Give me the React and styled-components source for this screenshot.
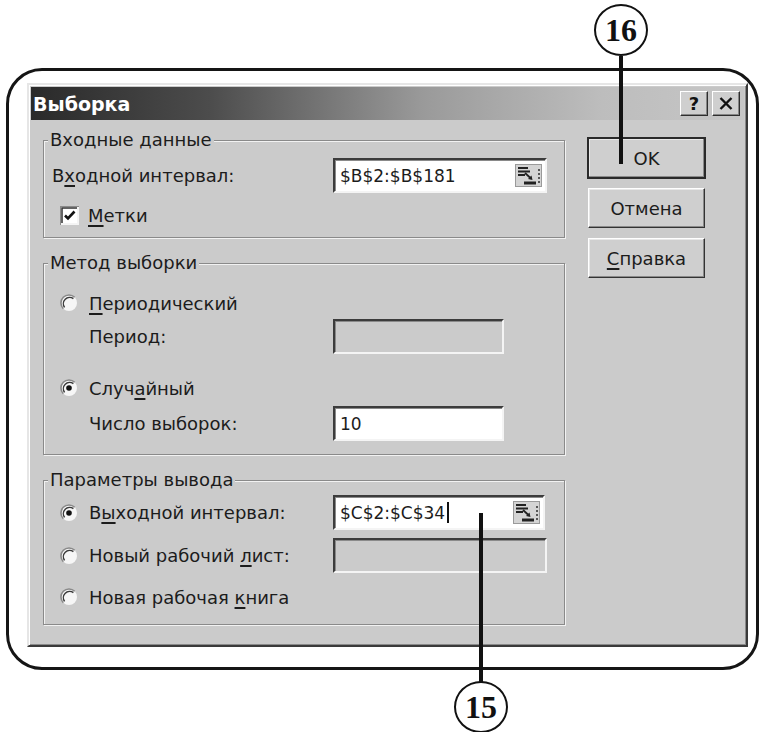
import React from "react"
import styled, { createGlobalStyle } from "styled-components"

const FACE = "#cbcbcb"
const INK = "#1c1c1c"

const Global = createGlobalStyle`
  html, body {
    margin: 0;
    padding: 0;
    background: #fff;
  }
  * {
    box-sizing: border-box;
  }
`

const Page = styled.div`
  position: relative;
  width: 762px;
  height: 732px;
  padding: 68px 0 0 6px;
  overflow: hidden;
  background: #fff;
  font-family: "DejaVu Sans", Verdana, sans-serif;
  color: ${INK};
`

const Frame = styled.div`
  width: 753px;
  height: 602px;
  border: 3px solid #151515;
  border-radius: 36px;
  padding: 12px 8px 20px 18px;
`

const Dialog = styled.div`
  width: 721px;
  height: 564px;
  background: ${FACE};
  border: 2px solid;
  border-color: #e6e6e6 #3a3a3a #3a3a3a #e6e6e6;
  padding: 2px;
  box-shadow: inset 1px 1px #fff, inset -1px -1px #8a8a8a;
  display: flex;
  flex-direction: column;
`

const TitleBar = styled.div`
  height: 33px;
  display: flex;
  align-items: center;
  padding: 0 4px 0 2px;
  background: linear-gradient(to right, #2a2a2a 0%, #4c4c4c 25%, #9a9a9a 55%, #bdbdbd 80%, #c6c6c6 100%);
`

const Title = styled.div`
  flex: 1;
  font-weight: bold;
  font-size: 19px;
  color: #fff;
  letter-spacing: 0;
`

const CapButtons = styled.div`
  display: flex;
  gap: 4px;
`

const CapButton = styled.div`
  width: 28px;
  height: 25px;
  display: flex;
  align-items: center;
  justify-content: center;
  background: #cfcfcf;
  border: 1px solid;
  border-color: #fff #2e2e2e #2e2e2e #fff;
  box-shadow: inset -1px -1px #858585;
  font-weight: bold;
  font-size: 18px;
  color: #111;
`

const Body = styled.div`
  display: grid;
  grid-template-columns: 522px 117px;
  column-gap: 23px;
  padding: 10px 0 0 12px;
`

const Groups = styled.div`
  display: flex;
  flex-direction: column;
  gap: 15px;
`

const Group = styled.fieldset`
  margin: 0;
  min-width: 0;
  padding: ${p => p.$pad};
  border: 1px solid #8a8a8a;
  box-shadow: inset 1px 1px #f2f2f2, 1px 1px #f2f2f2;
`

const Legend = styled.legend`
  margin-left: -4px;
  padding: 0 2px;
  font-size: 18px;
  line-height: 20px;
  background: ${FACE};
`

const Row = styled.div`
  display: grid;
  grid-template-columns: 281px 1fr;
  align-items: center;
  height: ${p => p.$h}px;
  margin-top: ${p => p.$mt || 0}px;
  font-size: 18px;
`

const Label = styled.div`
  display: flex;
  align-items: center;
  padding-left: ${p => p.$indent || 0}px;
  gap: ${p => p.$gap || 0}px;
  white-space: nowrap;
`

const Key = styled.u`
  text-decoration-thickness: 1.5px;
  text-underline-offset: 3px;
`

const Field = styled.div`
  width: ${p => p.$w}px;
  height: 35px;
  display: flex;
  align-items: center;
  padding: 0 3px 0 5px;
  background: ${p => (p.$disabled ? FACE : "#fff")};
  border: 2px solid;
  border-color: #3c3c3c #f4f4f4 #f4f4f4 #3c3c3c;
  box-shadow: inset 1px 1px #8a8a8a;
  font-size: 17px;
`

const FieldText = styled.span`
  flex: 1;
  display: flex;
  align-items: center;
`

const Caret = styled.span`
  display: inline-block;
  width: 1.5px;
  height: 21px;
  margin-left: 2px;
  background: #111;
`

const Buttons = styled.div`
  display: flex;
  flex-direction: column;
  gap: 10px;
  padding-top: 8px;
`

const Button = styled.div`
  height: 40px;
  display: flex;
  align-items: center;
  justify-content: center;
  background: #cfcfcf;
  border: 1px solid;
  border-color: #fff #333 #333 #fff;
  box-shadow: inset -1px -1px #8a8a8a, inset 1px 1px #e8e8e8;
  outline: ${p => (p.$default ? "2px solid #2a2a2a" : "none")};
  outline-offset: -1px;
  font-size: 18px;
`

const Bubble = styled.div`
  position: absolute;
  left: ${p => p.$x}px;
  top: ${p => p.$y}px;
  width: 54px;
  height: 52px;
  border: 2px solid #111;
  border-radius: 50%;
  background: #fff;
  display: flex;
  align-items: center;
  justify-content: center;
  font-family: "Liberation Serif", "Times New Roman", serif;
  font-weight: bold;
  font-size: 32px;
  color: #111;
  z-index: 2;
`

const Leader = styled.div`
  position: absolute;
  left: ${p => p.$x}px;
  top: ${p => p.$y}px;
  width: 4px;
  height: ${p => p.$h}px;
  background: #111;
  z-index: 1;
`

const Check = ({ checked }) => (
  <svg width="19" height="19" viewBox="0 0 19 19">
    <rect x="0" y="0" width="19" height="19" fill="#f4f4f4" />
    <path d="M0 19 V0 H19" stroke="#8a8a8a" strokeWidth="2" fill="none" />
    <path d="M2 17 V2 H17" stroke="#333" strokeWidth="1.5" fill="none" />
    <rect x="3" y="3" width="14" height="14" fill="#fff" />
    {checked && <path d="M5 9.5 L8 12.5 L14.5 5.5" stroke="#111" strokeWidth="2.6" fill="none" />}
  </svg>
)

const Radio = ({ checked }) => (
  <svg width="18" height="18" viewBox="0 0 18 18">
    <circle cx="9" cy="9" r="8" fill="#f6f6f6" />
    <path d="M3.3 14.7 A8 8 0 0 1 14.7 3.3" stroke="#8a8a8a" strokeWidth="1.6" fill="none" />
    <path d="M4.6 13.4 A6.3 6.3 0 0 1 13.4 4.6" stroke="#3a3a3a" strokeWidth="1.4" fill="none" />
    {checked && <circle cx="9" cy="9" r="2.8" fill="#111" />}
  </svg>
)

const RangeIcon = () => (
  <svg width="27" height="23" viewBox="0 0 27 23">
    <rect x="0.5" y="0.5" width="26" height="22" fill="#d4d4d4" stroke="#9a9a9a" />
    <path d="M3 4 H13 M3 7.5 H15 M3 11 H10" stroke="#222" strokeWidth="1.8" />
    <path d="M10 9 L16 14.5" stroke="#222" strokeWidth="1.8" />
    <path d="M13 15 L17.5 16 L16.5 11.5 Z" fill="#222" />
    <path d="M9 19 H21" stroke="#222" strokeWidth="3" />
    <path d="M24 5 V20" stroke="#222" strokeWidth="1.4" strokeDasharray="2 2" />
  </svg>
)

export default function App() {
  return (
    <Page>
      <Global />
      <Frame>
        <Dialog>
          <TitleBar>
            <Title>Выборка</Title>
            <CapButtons>
              <CapButton>?</CapButton>
              <CapButton>
                <svg width="14" height="13" viewBox="0 0 14 13">
                  <path d="M1.5 1 L12.5 12 M12.5 1 L1.5 12" stroke="#111" strokeWidth="2.4" />
                </svg>
              </CapButton>
            </CapButtons>
          </TitleBar>
          <Body>
            <Groups>
              <Group $pad="8px 0 7px 8px">
                <Legend>Входные данные</Legend>
                <Row $h={35}>
                  <Label>В<Key>х</Key>одной интервал:</Label>
                  <Field $w={214}>
                    <FieldText>$B$2:$B$181</FieldText>
                    <RangeIcon />
                  </Field>
                </Row>
                <Row $h={30} $mt={7}>
                  <Label $indent={8} $gap={9}>
                    <Check checked />
                    <span><Key>М</Key>етки</span>
                  </Label>
                </Row>
              </Group>

              <Group $pad="15px 0 13px 8px">
                <Legend>Метод выборки</Legend>
                <Row $h={30}>
                  <Label $indent={8} $gap={11}>
                    <Radio />
                    <span><Key>П</Key>ериодический</span>
                  </Label>
                </Row>
                <Row $h={35} $mt={1}>
                  <Label $indent={37}>Период:</Label>
                  <Field $w={171} $disabled />
                </Row>
                <Row $h={30} $mt={19}>
                  <Label $indent={8} $gap={11}>
                    <Radio checked />
                    <span>Случ<Key>а</Key>йный</span>
                  </Label>
                </Row>
                <Row $h={35} $mt={3}>
                  <Label $indent={37}>Число выборок:</Label>
                  <Field $w={171}>
                    <FieldText>10</FieldText>
                  </Field>
                </Row>
              </Group>

              <Group $pad="5px 0 12px 8px">
                <Legend>Параметры вывода</Legend>
                <Row $h={35}>
                  <Label $indent={8} $gap={11}>
                    <Radio checked />
                    <span>В<Key>ы</Key>ходной интервал:</span>
                  </Label>
                  <Field $w={212}>
                    <FieldText>$C$2:$C$34<Caret /></FieldText>
                    <RangeIcon />
                  </Field>
                </Row>
                <Row $h={35} $mt={8}>
                  <Label $indent={8} $gap={11}>
                    <Radio />
                    <span>Новый рабочий <Key>л</Key>ист:</span>
                  </Label>
                  <Field $w={214} $disabled />
                </Row>
                <Row $h={30} $mt={9}>
                  <Label $indent={8} $gap={11}>
                    <Radio />
                    <span>Новая рабочая <Key>к</Key>нига</span>
                  </Label>
                </Row>
              </Group>
            </Groups>

            <Buttons>
              <Button $default>OK</Button>
              <Button>Отмена</Button>
              <Button><span><Key>С</Key>правка</span></Button>
            </Buttons>
          </Body>
        </Dialog>
      </Frame>

      <Leader $x={619} $y={56} $h={108} />
      <Bubble $x={594} $y={4}>16</Bubble>
      <Leader $x={479} $y={513} $h={170} />
      <Bubble $x={454} $y={681}>15</Bubble>
    </Page>
  )
}
